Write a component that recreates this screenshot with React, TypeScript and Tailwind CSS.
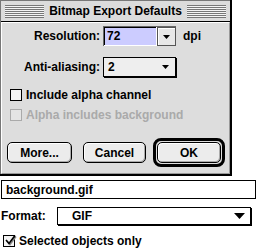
import React from "react";

const Stripes = () => (
  <div className="flex-1 h-[13px] bg-[repeating-linear-gradient(to_bottom,#777_0px,#777_1px,#f4f4f4_1px,#f4f4f4_2px)]" />
);

const SmallArrow = () => (
  <svg width="7" height="4" viewBox="0 0 7 4">
    <polygon points="0,0 7,0 3.5,4" fill="#000" />
  </svg>
);

const CheckBox = ({ disabled, checked }: { disabled?: boolean; checked?: boolean }) => (
  <div
    className={
      "w-[12px] h-[12px] border relative shrink-0 " +
      (disabled ? "border-[#aaa] bg-[#e4e4e4]" : "border-black bg-[#f4f4f4]")
    }
  >
    {checked && (
      <svg className="absolute left-[0px] top-[-2px]" width="13" height="13" viewBox="0 0 13 13">
        <path d="M2 6 L5 9.5 L11 1.5" stroke="#888" strokeWidth="1.5" fill="none" transform="translate(1,1)" />
        <path d="M2 6 L5 9.5 L11 1.5" stroke="#000" strokeWidth="1.6" fill="none" />
      </svg>
    )}
  </div>
);

const Button = ({ label, w }: { label: string; w: string }) => (
  <div
    className={
      "h-[21px] border border-black rounded-[5px] bg-[#ececec] flex items-center justify-center shadow-[inset_1px_1px_0_#fff,inset_-1px_-1px_0_#aaa] " +
      w
    }
  >
    {label}
  </div>
);

export default function App() {
  return (
    <div className="w-[266px] h-[250px] bg-white overflow-hidden text-[12px] font-bold text-black font-['Liberation_Sans',Arial,sans-serif] leading-none">
      {/* Dialog */}
      <div className="w-[232px] border-r-2 border-b-2 border-black">
        <div className="border-l border-t border-[#777]">
          {/* Title bar */}
          <div className="h-[21px] bg-[#dcdcdc] border-b border-black flex items-center px-[4px] gap-[5px]">
            <Stripes />
            <div className="whitespace-nowrap">Bitmap Export Defaults</div>
            <Stripes />
          </div>
          {/* Body */}
          <div className="h-[152px] bg-[#dddddd] border-l border-t border-white border-r border-b border-r-[#999] border-b-[#999] flex flex-col">
            {/* Resolution row */}
            <div className="mt-[3px] h-[20px] flex items-center">
              <div className="w-[98px] text-right">Resolution:</div>
              <div className="ml-[3px] h-[20px] flex border-l border-t border-[#666]">
                <div className="w-[53px] h-full bg-[#ccccff] border-r border-b border-white flex items-center pl-[3px] shadow-[inset_1px_1px_0_#000]">
                  72
                </div>
                <div className="w-[19px] h-full bg-[#e8e8e8] border border-[#555] flex items-center justify-center shadow-[inset_1px_1px_0_#fff]">
                  <SmallArrow />
                </div>
              </div>
              <div className="ml-[7px]">dpi</div>
            </div>
            {/* Anti-aliasing row */}
            <div className="mt-[11px] h-[20px] flex items-center">
              <div className="w-[98px] text-right">Anti-aliasing:</div>
              <div className="ml-[3px] w-[73px] h-[20px] bg-[#eeeeee] border border-black shadow-[1px_1px_0_#000] flex items-center pl-[4px] pr-[6px] justify-between">
                <span>2</span>
                <SmallArrow />
              </div>
            </div>
            {/* Checkboxes */}
            <div className="mt-[11px] flex items-center pl-[8px] gap-[4px] h-[13px]">
              <CheckBox />
              <span>Include alpha channel</span>
            </div>
            <div className="mt-[7px] flex items-center pl-[8px] gap-[4px] h-[13px] text-[#aaaaaa]">
              <CheckBox disabled />
              <span>Alpha includes background</span>
            </div>
            {/* Buttons */}
            <div className="mt-[17px] flex items-center pl-[5px]">
              <Button label="More..." w="w-[65px]" />
              <div className="ml-[11px]">
                <Button label="Cancel" w="w-[63px]" />
              </div>
              <div className="ml-[7px] border-[3px] border-black rounded-[8px] p-[1px] bg-[#dddddd]">
                <Button label="OK" w="w-[64px]" />
              </div>
            </div>
          </div>
        </div>
      </div>

      {/* Filename input */}
      <div className="mt-[4px] ml-[1px] w-[255px] h-[19px] border border-black flex items-center pl-[4px]">
        background.gif
      </div>

      {/* Format row */}
      <div className="mt-[8px] ml-[1px] flex items-center h-[18px]">
        <div className="w-[56px]">Format:</div>
        <div className="w-[194px] h-[18px] border border-black shadow-[1px_1px_0_#000] flex items-center pl-[14px] pr-[5px] justify-between">
          <span>GIF</span>
          <svg width="11" height="6" viewBox="0 0 11 6">
            <polygon points="0,0 11,0 5.5,6" fill="#000" />
          </svg>
        </div>
      </div>

      {/* Selected objects only */}
      <div className="mt-[9px] ml-[3px] flex items-center gap-[4px] h-[13px]">
        <CheckBox checked />
        <span>Selected objects only</span>
      </div>
    </div>
  );
}
